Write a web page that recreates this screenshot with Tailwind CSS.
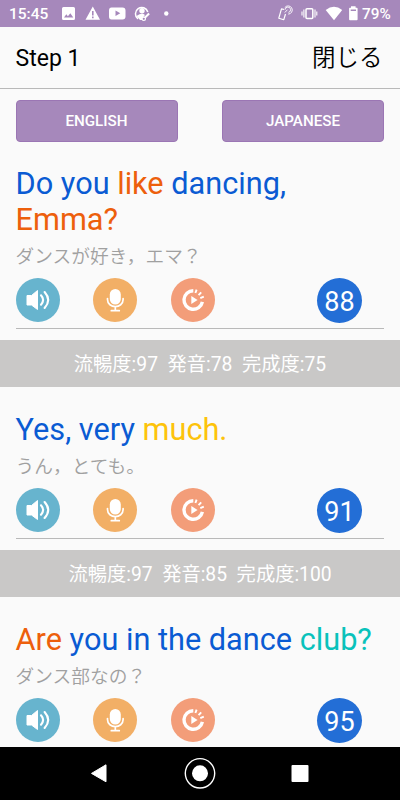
<!DOCTYPE html>
<html lang="ja">
<head>
<meta charset="utf-8">
<title>Step 1</title>
<script src="https://cdn.jsdelivr.net/npm/@tailwindcss/browser@4"></script>
</head>
<body class="bg-[#fafafa] font-[Roboto,'Noto_Sans_CJK_JP',sans-serif]">
<svg width="0" height="0" class="hidden">
  <symbol id="speaker" viewBox="0 0 44 44">
    <circle cx="22" cy="22" r="22" fill="#67b4ce"/>
    <path d="M11 17.5h4.5L21.5 12.500v19l-6-4.500H11z" fill="#fff" stroke="#fff" stroke-width="1" stroke-linejoin="round"/>
    <path d="M25 17.300q4.200 4.700 0 9.400M28.600 14q7.200 8 0 16" fill="none" stroke="#fff" stroke-width="2.100" stroke-linecap="round"/>
  </symbol>
  <symbol id="mic" viewBox="0 0 44 44">
    <circle cx="22" cy="22" r="22" fill="#f2af66"/>
    <rect x="16.800" y="11" width="11" height="15.600" rx="5.500" fill="#fff"/>
    <path d="M14.500 20.500v1c0 9.400 15.600 9.400 15.600 0v-1M22.300 28.500v4M18.300 32.700h8" fill="none" stroke="#fff" stroke-width="1.700" stroke-linecap="round"/>
  </symbol>
  <symbol id="replay" viewBox="0 0 44 44">
    <circle cx="22" cy="22" r="22" fill="#f39d79"/>
    <path d="M22.300 12.700A9.300 9.300 0 1 0 31.400 23.900" fill="none" stroke="#fff" stroke-width="3.400"/>
    <path d="M20.300 18l6.300 4-6.300 4z" fill="#fff"/>
    <path d="M24.400 15l1.200-3.400M27.600 17.200l2.600-2.900M29.300 20.200l3.500-1.500" fill="none" stroke="#fff" stroke-width="1.900"/>
  </symbol>
</svg>
<div class="flex h-[800px] w-[400px] flex-col overflow-hidden">
  <div class="flex h-[27px] shrink-0 items-center bg-[#a688bb] pl-[9px] text-white">
    <span class="w-[53px] pt-px text-[15.500px] font-medium leading-[26px]">15:45</span>
    <svg class="h-[27px] w-[110px]" viewBox="62 0 110 27" fill="#fff">
      <path fill-rule="evenodd" d="M63.500 7h10q1.500 0 1.500 1.500v10q0 1.500-1.500 1.500h-10q-1.500 0-1.500-1.500v-10Q62 7 63.500 7zM64 17.500h9.300l-3-4.200-2.400 3-1.600-2z"/>
      <path fill-rule="evenodd" d="M92.800 6.500L100 19.800H85.500zM92 11v4.500h1.600V11zM92 16.600v1.600h1.600v-1.600z"/>
      <path fill-rule="evenodd" d="M111.500 7.500h11q3 0 3 3v6q0 3-3 3h-11q-2.500 0-2.500-3v-6q0-3 2.500-3zM115.500 10.500v5.600l4.800-2.800z"/>
      <path d="M138 18.800A6.300 6.300 0 1 1 147.800 12" fill="none" stroke="#fff" stroke-width="1.500"/>
      <circle cx="142" cy="10.700" r="2.700"/>
      <path d="M136.500 16q5.500-4 8.500-1l-3 3.500v1.500h-2z"/>
      <path d="M143.800 18.800l5.300-5.300" stroke="#fff" stroke-width="2"/>
      <circle cx="143.800" cy="18.800" r="1.700" fill="#a688bb" stroke="#fff" stroke-width="1.200"/>
      <circle cx="166.300" cy="13.500" r="2.200"/>
    </svg>
    <svg class="ml-auto h-[27px] w-[82px]" viewBox="277 0 82 27" fill="#fff">
      <path d="M284.200 9.500l-2.700-.7-2.700 9.400 5 1.500 1.700-5.700" fill="none" stroke="#fff" stroke-width="1.200" stroke-linejoin="round"/>
      <path d="M284.800 12.500l2.700-2.800M285.200 9.600a2.700 2.700 0 1 1 3.300 2.800M284.700 7.800a4.100 4.100 0 1 1 3.500 6.300" fill="none" stroke="#fff" stroke-width=".9"/>
      <rect x="306" y="8.800" width="6.800" height="9.600" rx="1" fill="none" stroke="#fff" stroke-width="1.500"/>
      <path d="M303.900 9.500v8M315 9.500v8M302 11.500v4M316.800 11.500v4" stroke="#fff" stroke-width="1.100"/>
      <path d="M325.700 10q8.300-6.700 16.500 0L334 20.300z"/>
      <path fill-rule="evenodd" d="M351 6.200h4.600v1.500h1.200q.8 0 .8.800v10.700q0 1-.8 1h-6.900q-.8 0-.8-1V8.500q0-.8.8-.8h1.100zM350.700 9.500v1.500h5.300V9.500z"/>
    </svg>
    <span class="w-[41px] pl-[3px] pt-px text-[15.300px] font-medium leading-[26px]">79%</span>
  </div>
  <header class="flex h-[62px] shrink-0 items-center justify-between border-b border-[#b9b9b9] pl-[15.500px] pr-[17.500px] text-black">
    <h1 class="pt-[4px] text-[23px]">Step 1</h1>
    <span class="pt-[3px] text-[23.500px] font-[350]">閉じる</span>
  </header>
  <main class="h-[658px] overflow-hidden">
    <div class="flex h-[77px] justify-between px-4 pt-[11px] text-[15.200px] font-medium text-white">
      <button class="h-[42px] w-[162px] rounded-[4px] border border-[#9b76b4] bg-[#a688bb] pr-px pt-px">ENGLISH</button>
      <button class="h-[42px] w-[162px] rounded-[4px] border border-[#9b76b4] bg-[#a688bb] pt-px">JAPANESE</button>
    </div>
    <section>
      <div class="mx-[15.600px] flex h-[163px] flex-col border-b border-[#b9b9b9]">
        <p class="whitespace-nowrap text-[30.700px] leading-[36px] text-[#0a5bd3]">Do you <span class="text-[#ed5f0c]">like</span> dancing,<br><span class="text-[#ed5f0c]">Emma?</span></p>
        <p class="h-10 text-[18.700px] font-[350] leading-[39px] text-[#a0a0a0]">ダンスが好き，エマ？</p>
        <div class="flex h-[45px] items-start gap-[33.800px]">
          <svg class="size-[44px]"><use href="#speaker"/></svg>
          <svg class="size-[44px]"><use href="#mic"/></svg>
          <svg class="size-[44px]"><use href="#replay"/></svg>
          <span class="ml-auto mr-[22.400px] flex size-[45px] items-center justify-center rounded-full bg-[#236ed6] pt-[3px] text-[27px] text-white">88</span>
        </div>
      </div>
      <p class="mt-[11px] h-[47px] whitespace-pre bg-[#c9c8c7] text-center text-[19.300px] leading-[50px] text-white">流暢度:97  発音:78  完成度:75</p>
    </section>
    <section class="pt-[25px]">
      <div class="mx-[15.600px] flex h-[127px] flex-col border-b border-[#b9b9b9]">
        <p class="whitespace-nowrap text-[30.700px] leading-[36px] text-[#0a5bd3]">Yes, very <span class="text-[#fdc30b]">much.</span></p>
        <p class="h-10 text-[18.700px] font-[350] leading-[39px] text-[#a0a0a0]">うん，とても。</p>
        <div class="flex h-[45px] items-start gap-[33.800px]">
          <svg class="size-[44px]"><use href="#speaker"/></svg>
          <svg class="size-[44px]"><use href="#mic"/></svg>
          <svg class="size-[44px]"><use href="#replay"/></svg>
          <span class="ml-auto mr-[22.400px] flex size-[45px] items-center justify-center rounded-full bg-[#236ed6] pt-[3px] text-[27px] text-white">91</span>
        </div>
      </div>
      <p class="mt-[11px] h-[47px] whitespace-pre bg-[#c9c8c7] text-center text-[19.300px] leading-[50px] text-white">流暢度:97  発音:85  完成度:100</p>
    </section>
    <section class="pt-[25px]">
      <div class="mx-[15.600px] flex flex-col">
        <p class="whitespace-nowrap text-[30.700px] leading-[36px] text-[#0a5bd3]"><span class="text-[#ed5f0c]">Are</span> you in the dance <span class="text-[#09c2bb]">club?</span></p>
        <p class="h-10 text-[18.700px] font-[350] leading-[39px] text-[#a0a0a0]">ダンス部なの？</p>
        <div class="flex h-[45px] items-start gap-[33.800px]">
          <svg class="size-[44px]"><use href="#speaker"/></svg>
          <svg class="size-[44px]"><use href="#mic"/></svg>
          <svg class="size-[44px]"><use href="#replay"/></svg>
          <span class="ml-auto mr-[22.400px] flex size-[45px] items-center justify-center rounded-full bg-[#236ed6] pt-[3px] text-[27px] text-white">95</span>
        </div>
      </div>
    </section>
  </main>
  <nav class="h-[53px] shrink-0 bg-black">
    <svg class="h-[53px] w-[400px]" viewBox="0 747 400 53" fill="#fff">
      <path d="M106 764.800v17L91.500 773.400z" stroke="#fff" stroke-linejoin="round"/>
      <circle cx="200" cy="773.300" r="14.700" fill="none" stroke="#fff" stroke-width="1.400"/>
      <circle cx="200" cy="773.300" r="8"/>
      <rect x="291.500" y="765" width="17" height="17" rx="1"/>
    </svg>
  </nav>
</div>
</body>
</html>
